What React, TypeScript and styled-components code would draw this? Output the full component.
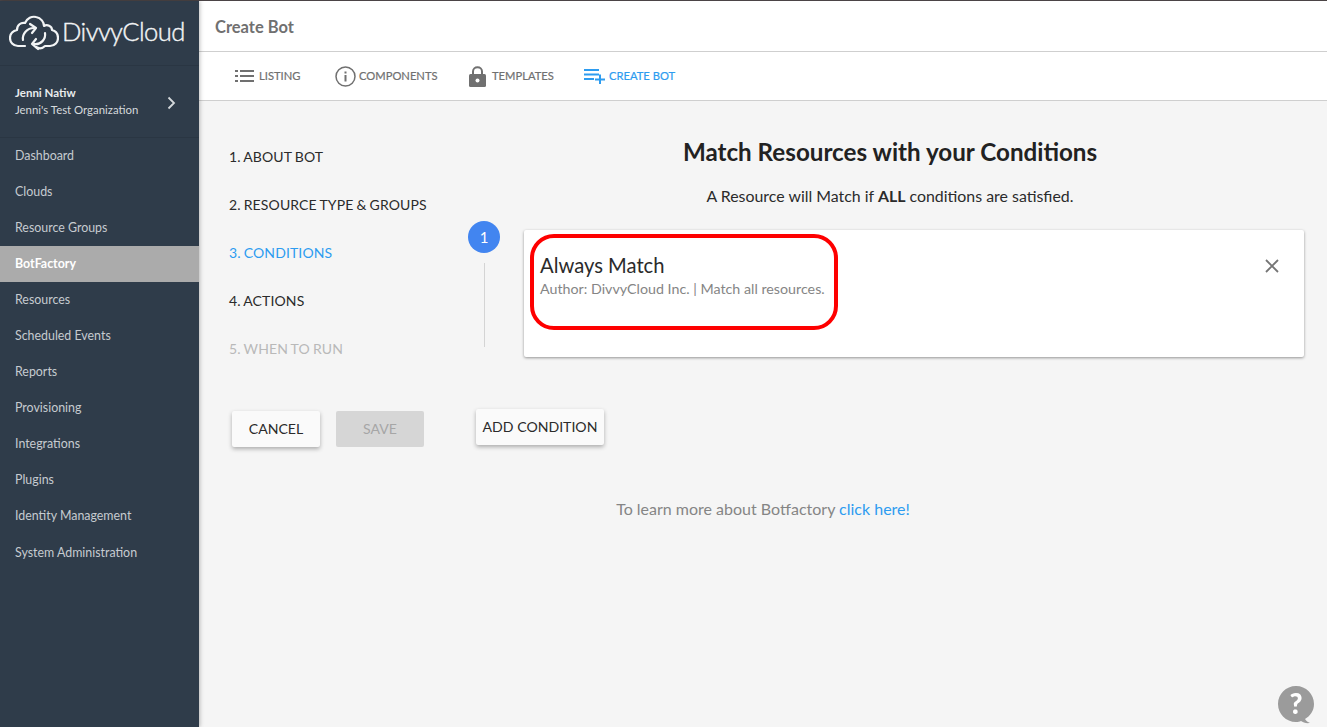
import React from 'react';
import styled, { createGlobalStyle } from 'styled-components';

const GlobalStyle = createGlobalStyle`
  html, body {
    margin: 0;
    padding: 0;
    height: 100%;
    overflow: hidden;
    background: #f5f5f5;
    font-family: Lato, "Open Sans", sans-serif;
  }
  #root {
    height: 100%;
  }
`;

const Page = styled.div`
  display: flex;
  flex-direction: column;
  width: 1327px;
  height: 727px;
`;

const TopEdge = styled.div`
  height: 1px;
  flex: none;
  background: #4b4446;
`;

const Body = styled.div`
  display: flex;
  flex: 1;
  min-height: 0;
`;

const Sidebar = styled.aside`
  width: 199px;
  flex: none;
  background: #2f3c4a;
  box-shadow: 1px 0 4px rgba(0, 0, 0, 0.25);
  z-index: 1;
`;

const LogoRow = styled.div`
  display: flex;
  align-items: center;
  gap: 3px;
  height: 65px;
  padding: 0 0 3px 9px;
  box-sizing: border-box;
  border-bottom: 1px solid #2a3643;
  color: #f2f4f5;
`;

const LogoText = styled.span`
  font-size: 25.6px;
  font-weight: 300;
  letter-spacing: -0.6px;
  line-height: 1;
  -webkit-text-stroke: 0.4px #f2f4f5;
`;

const UserBlock = styled.div`
  display: flex;
  align-items: center;
  justify-content: space-between;
  height: 72px;
  padding: 0 23px 2px 15px;
  box-sizing: border-box;
  border-bottom: 1px solid #2a3643;
`;

const UserName = styled.div`
  font-size: 11.5px;
  font-weight: 700;
  line-height: 17px;
  color: #e8ebed;
`;

const UserOrg = styled.div`
  font-size: 11.4px;
  line-height: 17px;
  color: #d5d9dc;
`;

const Chevron = styled.svg`
  margin-top: 4px;
`;

const NavList = styled.nav`
  display: flex;
  flex-direction: column;
`;

const NavItem = styled.a<{ $active?: boolean }>`
  display: flex;
  align-items: center;
  height: 36.1px;
  box-sizing: border-box;
  padding: 0 0 2px 15px;
  font-size: 12.4px;
  font-weight: ${p => (p.$active ? 700 : 400)};
  color: ${p => (p.$active ? '#ffffff' : '#c6cbd0')};
  background: ${p => (p.$active ? '#ababab' : 'transparent')};
`;

const Main = styled.main`
  display: flex;
  flex: 1;
  flex-direction: column;
  min-width: 0;
`;

const TitleBar = styled.header`
  display: flex;
  align-items: center;
  height: 51px;
  padding: 2px 0 0 16px;
  box-sizing: border-box;
  background: #fff;
  border-bottom: 1px solid #cfcfcf;
  font-size: 16.5px;
  font-weight: 700;
  color: #707070;
`;

const TabBar = styled.div`
  display: flex;
  align-items: center;
  height: 49px;
  padding-left: 36px;
  box-sizing: border-box;
  background: #fff;
  border-bottom: 1px solid #cfcfcf;
`;

const Tab = styled.a<{ $active?: boolean; $gap: number; $width: number }>`
  display: flex;
  align-items: center;
  gap: ${p => p.$gap}px;
  width: ${p => p.$width}px;
  flex: none;
  font-size: 11.2px;
  line-height: 12px;
  font-weight: 400;
  -webkit-text-stroke: 0.2px currentColor;
  color: ${p => (p.$active ? '#2d9cf0' : '#707070')};
`;

const TabLabel = styled.span`
  margin-top: -1px;
`;

const Content = styled.div`
  flex: 1;
  background: #f5f5f5;
  padding: 31px 23px 0 30px;
`;

const Columns = styled.div`
  display: flex;
`;

const LeftColumn = styled.div`
  width: 239px;
  flex: none;
`;

const StepRow = styled.div<{ $state?: 'active' | 'disabled' }>`
  display: flex;
  align-items: center;
  height: 48px;
  font-size: 14px;
  letter-spacing: 0.13px;
  word-spacing: -0.7px;
  color: ${p =>
    p.$state === 'active' ? '#2d9cf0' : p.$state === 'disabled' ? '#b9b9b9' : '#2b2b2b'};
`;

const FormActions = styled.div`
  display: flex;
  gap: 16px;
  margin: 39px 0 0 3px;
`;

const Button = styled.button<{ $disabled?: boolean; $width: number }>`
  width: ${p => p.$width}px;
  height: 36px;
  padding: 0 0 2px;
  border: none;
  border-radius: 2px;
  font-family: inherit;
  font-size: 14.1px;
  color: ${p => (p.$disabled ? '#a6a6a6' : '#2b2b2b')};
  background: ${p => (p.$disabled ? '#d6d6d6' : '#fafafa')};
  box-shadow: ${p => (p.$disabled ? 'none' : '0 2px 4px rgba(0, 0, 0, 0.3)')};
`;

const RightColumn = styled.div`
  flex: 1;
  min-width: 0;
`;

const Heading = styled.h1`
  margin: 1px 0 0 8px;
  height: 36px;
  font-size: 24.2px;
  line-height: 38px;
  font-weight: 700;
  text-align: center;
  color: #222;
`;

const SubHeading = styled.p`
  margin: 17px 0 0 8px;
  font-size: 15.9px;
  line-height: 20px;
  text-align: center;
  color: #2b2b2b;
`;

const ConditionRow = styled.div`
  display: flex;
  gap: 24px;
  margin-top: 24px;
`;

const Timeline = styled.div`
  display: flex;
  flex-direction: column;
  align-items: center;
  width: 32px;
  flex: none;
  margin-top: -9px;
`;

const Badge = styled.div`
  display: flex;
  align-items: center;
  justify-content: center;
  width: 32px;
  height: 32px;
  border-radius: 50%;
  background: #4285f0;
  color: #fff;
  font-size: 15px;
`;

const TimelineLine = styled.div`
  width: 1px;
  height: 84px;
  margin-top: 10px;
  background: #d4d4d4;
`;

const Card = styled.div`
  position: relative;
  flex: 1;
  height: 127px;
  box-sizing: border-box;
  padding: 23px 16px 0;
  background: #fff;
  border-radius: 2px;
  box-shadow: 0 1px 3px rgba(0, 0, 0, 0.4);
`;

const CardTitle = styled.div`
  font-size: 20.2px;
  line-height: 24px;
  color: #2b2b2b;
`;

const CardMeta = styled.div`
  margin-top: 2px;
  font-size: 14.25px;
  line-height: 20px;
  color: #858585;
`;

const Highlight = styled.div`
  position: absolute;
  left: 6px;
  top: 4px;
  width: 308px;
  height: 96px;
  box-sizing: border-box;
  border: 4px solid #fe0000;
  border-radius: 24px;
`;

const CloseIcon = styled.svg`
  position: absolute;
  top: 29px;
  right: 25px;
`;

const AddWrap = styled.div`
  margin: 52px 0 0 8px;
`;

const LearnMore = styled.p`
  margin: 52px 0 0;
  padding-right: 7px;
  font-size: 16px;
  line-height: 20px;
  text-align: center;
  color: #858585;
`;

const LearnLink = styled.a`
  color: #2d9cf0;
`;

const HelpButton = styled.svg`
  position: fixed;
  left: 1277px;
  top: 685px;
`;

const navItems = [
  'Dashboard',
  'Clouds',
  'Resource Groups',
  'BotFactory',
  'Resources',
  'Scheduled Events',
  'Reports',
  'Provisioning',
  'Integrations',
  'Plugins',
  'Identity Management',
  'System Administration',
];

const steps: { label: string; state?: 'active' | 'disabled' }[] = [
  { label: '1. ABOUT BOT' },
  { label: '2. RESOURCE TYPE & GROUPS' },
  { label: '3. CONDITIONS', state: 'active' },
  { label: '4. ACTIONS' },
  { label: '5. WHEN TO RUN', state: 'disabled' },
];

const CloudLogo = () => (
  <svg width="50" height="38" viewBox="0 0 50 38" fill="none" stroke="currentColor" strokeWidth="2.2" strokeLinecap="round" strokeLinejoin="round">
    <path d="M16 33 H9 C4 33 1 29 1 25 C1 21 4 18 8 17 C8 12 12 9 16 10 C18 5 23 3 27 4 C32 5 35 9 35 13 C38 11 43 13 43 17 C47 18 49 21 49 25 C49 29 46 33 41 33 H36 C33 36 30 36 27 34" />
    <path d="M14 27 C13 21 18 15 25 15" />
    <path d="M21 11 L27 15 L23 20" />
    <path d="M36 20 C37 26 32 32 25 31" />
    <path d="M29 36 L23 31 L27 26" />
  </svg>
);

const ListIcon = () => (
  <svg width="19" height="12" viewBox="0 0 19 12" fill="#707070">
    <rect x="0" y="0" width="3" height="2" />
    <rect x="5" y="0" width="14" height="2" />
    <rect x="0" y="5" width="3" height="2" />
    <rect x="5" y="5" width="14" height="2" />
    <rect x="0" y="10" width="3" height="2" />
    <rect x="5" y="10" width="14" height="2" />
  </svg>
);

const InfoIcon = () => (
  <svg width="21" height="21" viewBox="0 0 21 21" fill="none">
    <circle cx="10.5" cy="10.5" r="9.5" stroke="#707070" strokeWidth="1.5" />
    <rect x="9.5" y="9" width="2" height="6.5" fill="#707070" />
    <rect x="9.5" y="5.5" width="2" height="2" fill="#707070" />
  </svg>
);

const LockIcon = () => (
  <svg width="17" height="21" viewBox="0 0 17 21" fill="none">
    <path d="M4 9 V5.5 C4 3 6 1.2 8.5 1.2 C11 1.2 13 3 13 5.5 V9" stroke="#707070" strokeWidth="2" />
    <rect x="0" y="8" width="17" height="13" rx="1.5" fill="#707070" />
    <circle cx="8.5" cy="14.5" r="2" fill="#fff" />
  </svg>
);

const CreateIcon = () => (
  <svg width="21" height="15" viewBox="0 0 21 15" fill="#2d9cf0">
    <rect x="0" y="0" width="15" height="2" />
    <rect x="0" y="4.5" width="15" height="2" />
    <rect x="0" y="9" width="10" height="2" />
    <rect x="11" y="9.5" width="10" height="2" />
    <rect x="15" y="5.5" width="2" height="9.5" />
  </svg>
);

const App: React.FC = () => {
  return (
    <Page>
      <GlobalStyle />
      <TopEdge />
      <Body>
        <Sidebar>
          <LogoRow>
            <CloudLogo />
            <LogoText>DivvyCloud</LogoText>
          </LogoRow>
          <UserBlock>
            <div>
              <UserName>Jenni Natiw</UserName>
              <UserOrg>Jenni's Test Organization</UserOrg>
            </div>
            <Chevron width="9" height="14" viewBox="0 0 9 14" fill="none" stroke="#d5d9dc" strokeWidth="1.8">
              <path d="M1.5 1.5 L7 7 L1.5 12.5" />
            </Chevron>
          </UserBlock>
          <NavList>
            {navItems.map(item => (
              <NavItem key={item} $active={item === 'BotFactory'}>
                {item}
              </NavItem>
            ))}
          </NavList>
        </Sidebar>
        <Main>
          <TitleBar>Create Bot</TitleBar>
          <TabBar>
            <Tab $gap={5} $width={100}>
              <ListIcon />
              <TabLabel>LISTING</TabLabel>
            </Tab>
            <Tab $gap={3} $width={134}>
              <InfoIcon />
              <TabLabel>COMPONENTS</TabLabel>
            </Tab>
            <Tab $gap={6} $width={115}>
              <LockIcon />
              <TabLabel>TEMPLATES</TabLabel>
            </Tab>
            <Tab $active $gap={4} $width={100}>
              <CreateIcon />
              <TabLabel>CREATE BOT</TabLabel>
            </Tab>
          </TabBar>
          <Content>
            <Columns>
              <LeftColumn>
                {steps.map(step => (
                  <StepRow key={step.label} $state={step.state}>
                    {step.label}
                  </StepRow>
                ))}
                <FormActions>
                  <Button $width={88}>CANCEL</Button>
                  <Button $width={88} $disabled>
                    SAVE
                  </Button>
                </FormActions>
              </LeftColumn>
              <RightColumn>
                <Heading>Match Resources with your Conditions</Heading>
                <SubHeading>
                  A Resource will Match if <b>ALL</b> conditions are satisfied.
                </SubHeading>
                <ConditionRow>
                  <Timeline>
                    <Badge>1</Badge>
                    <TimelineLine />
                  </Timeline>
                  <Card>
                    <CardTitle>Always Match</CardTitle>
                    <CardMeta>Author: DivvyCloud Inc. | Match all resources.</CardMeta>
                    <Highlight />
                    <CloseIcon width="14" height="14" viewBox="0 0 14 14" stroke="#757575" strokeWidth="1.8">
                      <path d="M1 1 L13 13 M13 1 L1 13" />
                    </CloseIcon>
                  </Card>
                </ConditionRow>
                <AddWrap>
                  <Button $width={128}>ADD CONDITION</Button>
                </AddWrap>
              </RightColumn>
            </Columns>
            <LearnMore>
              To learn more about Botfactory <LearnLink>click here!</LearnLink>
            </LearnMore>
          </Content>
        </Main>
      </Body>
      <HelpButton width="38" height="39" viewBox="0 0 38 39">
        <path d="M19 1 C29 1 37 9 37 19 C37 26 33 31 28 34 C29 36 31 37 33 38 C29 38.5 26 37.5 24 36 C22.5 36.7 21 37 19 37 C9 37 1 29 1 19 C1 9 9 1 19 1 Z" fill="#9b9b9b" />
        <text x="19" y="29" textAnchor="middle" fontFamily="Lato, sans-serif" fontWeight="900" fontSize="28" fill="#fff">?</text>
      </HelpButton>
    </Page>
  );
};

export default App;
